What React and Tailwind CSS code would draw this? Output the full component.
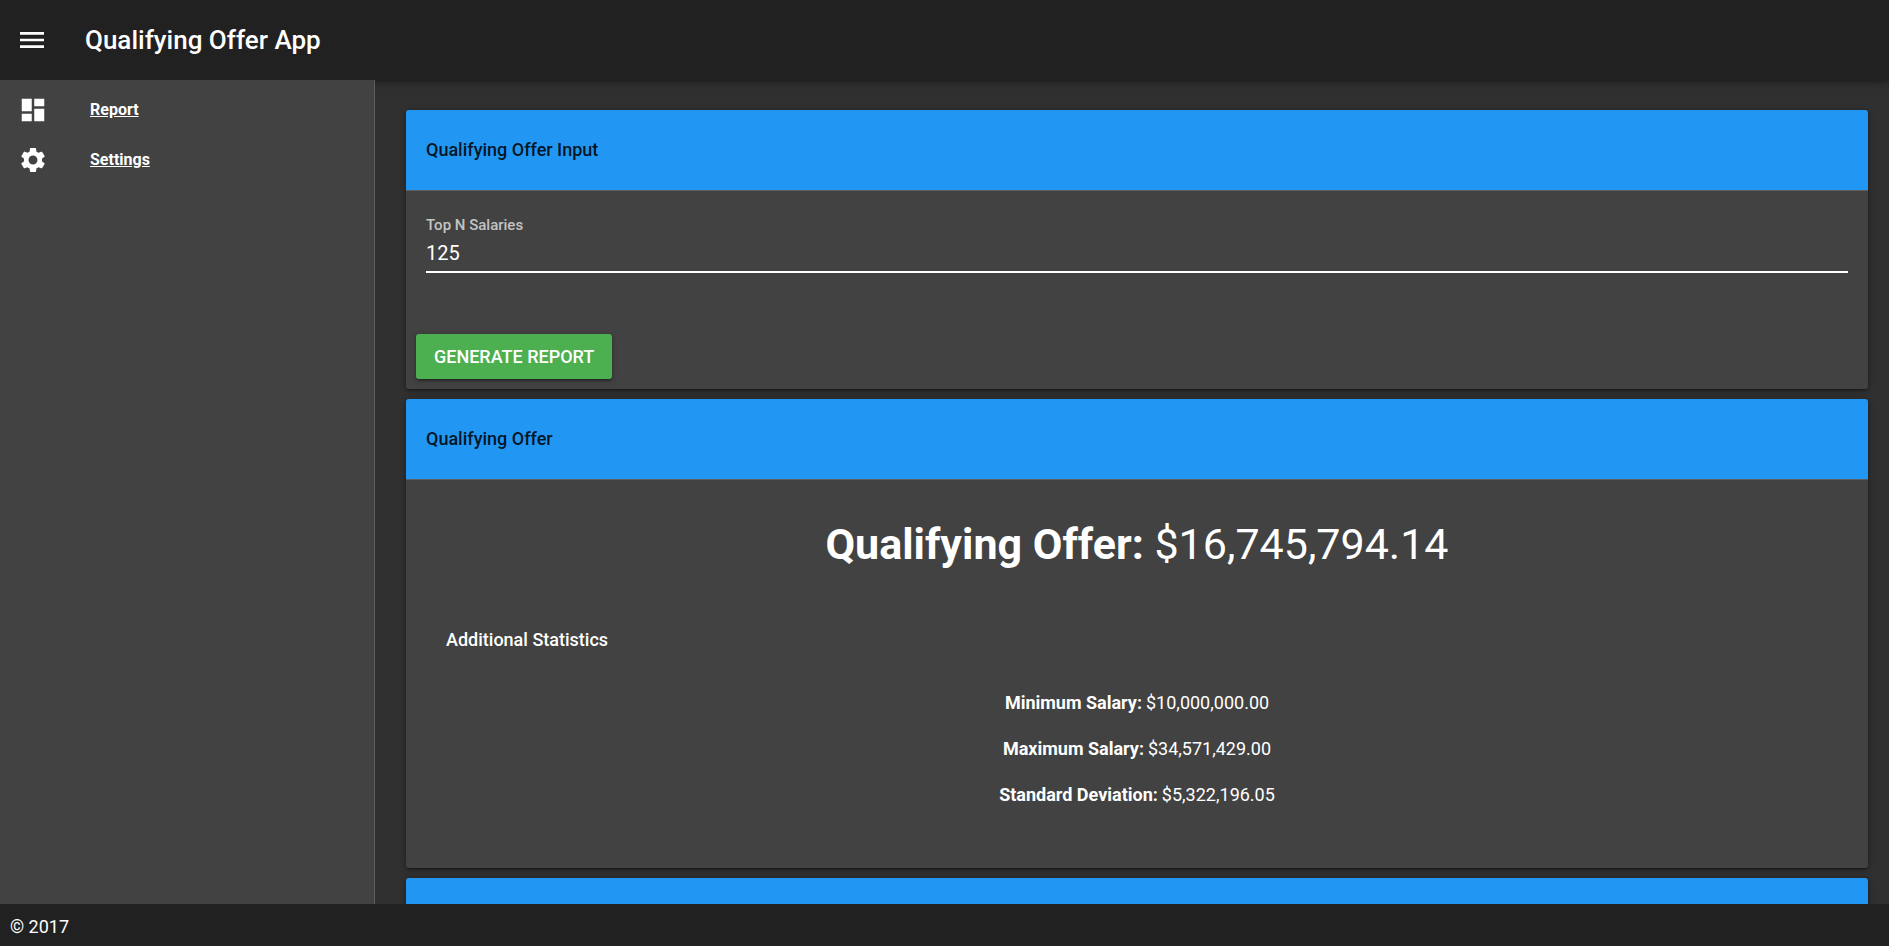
import React from "react";
import { MdMenu, MdDashboard, MdSettings } from "react-icons/md";

const links = [
  { label: "Report", href: "#report", Icon: MdDashboard },
  { label: "Settings", href: "#settings", Icon: MdSettings },
];

const statistics = [
  { label: "Minimum Salary:", value: "$10,000,000.00" },
  { label: "Maximum Salary:", value: "$34,571,429.00" },
  { label: "Standard Deviation:", value: "$5,322,196.05" },
];

function Card({ title, children }) {
  return (
    <section className="rounded-[3px] bg-[#424242] shadow-[0_3px_1px_-2px_rgba(0,0,0,0.2),0_2px_3px_rgba(0,0,0,0.14),0_1px_6px_rgba(0,0,0,0.3)]">
      <header className="flex h-20 items-center rounded-t-[3px] bg-[#2196f3] px-5">
        {title && <h2 className="text-lg font-medium text-black/87">{title}</h2>}
      </header>
      <div className="border-t border-[#5e5e5e]">{children}</div>
    </section>
  );
}

export default function App() {
  return (
    <div className="flex h-screen flex-col bg-[#303030] font-['Roboto',sans-serif] text-white">
      <header className="relative flex h-20 shrink-0 items-center gap-[37px] bg-[#212121] px-4 shadow-[0_2px_5px_rgba(0,0,0,0.3),0_1px_12px_rgba(0,0,0,0.2)]">
        <button type="button" aria-label="Toggle navigation" className="text-[32px]">
          <MdMenu />
        </button>
        <h1 className="text-[26px] font-medium">Qualifying Offer App</h1>
      </header>

      <div className="flex min-h-0 flex-1">
        <nav className="relative w-[375px] shrink-0 border-r border-[#5e5e5e] bg-[#424242] py-[5px]">
          <ul>
            {links.map(({ label, href, Icon }) => (
              <li key={label}>
                <a href={href} className="flex h-[50px] items-center gap-[42px] px-[18px] font-bold">
                  <Icon className="size-[30px]" />
                  <span className="underline">{label}</span>
                </a>
              </li>
            ))}
          </ul>
        </nav>

        <main className="flex min-w-0 flex-1 flex-col gap-2.5 overflow-hidden pt-[30px] pr-[21px] pl-[31px]">
          <Card title="Qualifying Offer Input">
            <form onSubmit={(event) => event.preventDefault()}>
              <div className="flex flex-col px-5 pt-6">
                <label htmlFor="top-n" className="text-[15px] leading-5 font-medium text-white/70">
                  Top N Salaries
                </label>
                <input
                  id="top-n"
                  type="text"
                  inputMode="numeric"
                  defaultValue="125"
                  className="h-[38px] border-b-2 border-white bg-transparent text-xl outline-none"
                />
              </div>
              <div className="px-2.5 pt-[61px] pb-2.5">
                <button
                  type="submit"
                  className="flex h-[45px] items-center rounded-[3px] bg-[#4caf50] px-[18px] text-lg font-medium uppercase shadow-[0_3px_1px_-2px_rgba(0,0,0,0.2),0_2px_3px_rgba(0,0,0,0.24),0_1px_6px_rgba(0,0,0,0.2)]"
                >
                  Generate Report
                </button>
              </div>
            </form>
          </Card>

          <Card title="Qualifying Offer">
            <div className="px-10 pt-10 pb-[50px]">
              <p className="text-center text-[43px] leading-12">
                <strong>Qualifying Offer:</strong> $16,745,794.14
              </p>
              <h3 className="mt-[58px] text-lg leading-7 font-medium">Additional Statistics</h3>
              <dl className="mt-[26px]">
                {statistics.map(({ label, value }) => (
                  <div key={label} className="flex h-[46px] items-center justify-center gap-1 text-lg">
                    <dt className="font-bold">{label}</dt>
                    <dd>{value}</dd>
                  </div>
                ))}
              </dl>
            </div>
          </Card>

          <Card />
        </main>
      </div>

      <footer className="relative flex h-[42px] shrink-0 items-center bg-[#212121] px-2.5 pt-1 text-lg">
        © 2017
      </footer>
    </div>
  );
}
